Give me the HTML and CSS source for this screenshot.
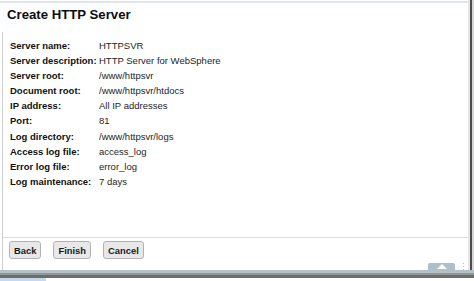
FILE: index.html
```html
<!DOCTYPE html>
<html>
    <head>
        <meta charset="utf-8">
        <title>Create HTTP Server</title>
        <link rel="stylesheet" href="styles.css">
    </head>
    <body>
        <div class="window">
            <div class="main">
                <div class="panel">
                    <div class="title">Create HTTP Server</div>
                    <div class="content">
                        <div class="fields">
                            <div class="label">Server name:</div><div class="value">HTTPSVR</div>
                            <div class="label">Server description:</div><div class="value">HTTP Server for WebSphere</div>
                            <div class="label">Server root:</div><div class="value">/www/httpsvr</div>
                            <div class="label">Document root:</div><div class="value">/www/httpsvr/htdocs</div>
                            <div class="label">IP address:</div><div class="value">All IP addresses</div>
                            <div class="label">Port:</div><div class="value">81</div>
                            <div class="label">Log directory:</div><div class="value">/www/httpsvr/logs</div>
                            <div class="label">Access log file:</div><div class="value">access_log</div>
                            <div class="label">Error log file:</div><div class="value">error_log</div>
                            <div class="label">Log maintenance:</div><div class="value">7 days</div>
                        </div>
                        <div class="spacer"></div>
                        <div class="actions">
                            <button class="btn">Back</button>
                            <button class="btn">Finish</button>
                            <button class="btn">Cancel</button>
                        </div>
                        <div class="foot">
                            <div class="tab">
                                <svg width="10" height="5" viewBox="0 0 10 5"><path d="M0 5 L5 0 L10 5 Z" fill="#fff"/></svg>
                            </div>
                            <div class="grip"><i></i><i></i><i></i></div>
                        </div>
                    </div>
                </div>
                <div class="edge"></div>
                <div class="edge-out"></div>
            </div>
            <div class="status">
                <div class="band1"></div>
                <div class="band2"></div>
                <div class="band3"></div>
                <div class="taskbar"><div class="task"></div></div>
            </div>
        </div>
    </body>
</html>
```

FILE: styles.css
```css
* {margin: 0px;padding: 0px;box-sizing: border-box;}
body {width: 474px;height: 281px;overflow: hidden;background-color: #fff;font-family: "Liberation Sans", Arial, sans-serif;}
.window {display: flex;flex-direction: column;height: 281px;}
.main {display: flex;flex: 1;min-height: 0;}
.panel {flex: 1;display: flex;flex-direction: column;margin-top: 1px;border-top: 2px solid #dfe5ea;}
.title {font-size: 13.2px;font-weight: bold;color: #0d0d0d;line-height: 23px;height: 29px;padding-left: 7px;}
.content {flex: 1;display: flex;flex-direction: column;margin-left: 2px;border-left: 1px solid #cfcfcf;}
.fields {display: grid;grid-template-columns: 89px auto;padding: 6px 0 0 7px;font-size: 9.5px;line-height: 15.1px;}
.label {font-weight: bold;color: #111;white-space: nowrap;}
.value {color: #1e1e1e;white-space: nowrap;}
.spacer {flex: 1;}
.actions {display: flex;gap: 12px;padding: 3px 6px 0;border-top: 1px solid #dcdcdc;}
.btn {height: 18px;padding: 0 4px;border: 1px solid #b2b2b2;border-radius: 3px;background-color: #e8e8e8;font-family: "Liberation Sans", Arial, sans-serif;font-size: 9.4px;font-weight: bold;color: #1a1a1a;}
.foot {display: flex;justify-content: flex-end;align-items: flex-start;height: 11px;padding-top: 4px;padding-right: 4px;}
.tab {width: 27px;height: 7px;background-color: #aebfcc;border-radius: 2px 2px 0 0;display: flex;justify-content: center;align-items: center;}
.grip {display: flex;flex-direction: column;gap: 2px;margin-left: 8px;}
.grip i {display: block;width: 1px;height: 1px;background-color: #bbb;}
.edge {width: 4px;background-color: #e6e6e6;border-right: 2px solid #4d4d4d;}
.edge-out {width: 2px;background-color: #d6d6d6;}
.status {height: 11px;display: flex;flex-direction: column;}
.band1 {height: 3px;background-color: #b4c0c8;}
.band2 {height: 2px;background-color: #8f979b;}
.band3 {height: 3px;background-color: #6e6d66;}
.taskbar {flex: 1;background-color: #fff;}
.task {width: 46px;height: 100%;background-color: #c5d9ee;}
```
